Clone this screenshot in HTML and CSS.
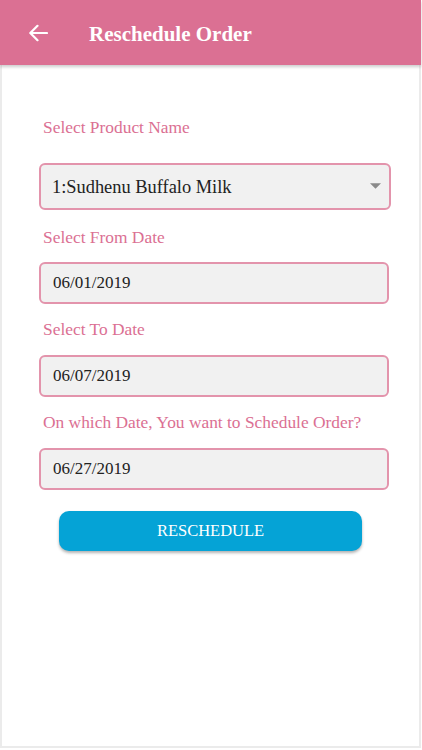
FILE: index.html
```html
<!DOCTYPE html>
<html lang="en">
<head>
  <meta charset="UTF-8" />
  <meta name="viewport" content="width=device-width, initial-scale=1.0"/>
  <title>Reschedule Order</title>
  <link rel="stylesheet" href="styles.css">
</head>
<body>
  <div class="screen">
    <header class="toolbar">
      <svg class="back" viewBox="0 0 20 18" aria-hidden="true">
        <path d="M19 9H2.5M9.5 1.8L2.3 9l7.2 7.2" fill="none" stroke="#fff" stroke-width="2.2" stroke-linecap="round" stroke-linejoin="round"/>
      </svg>
      <h1>Reschedule Order</h1>
    </header>

    <form class="order-form">
      <label class="field-label first" for="product">Select Product Name</label>
      <div class="select-wrap">
        <select id="product">
          <option>1:Sudhenu Buffalo Milk</option>
        </select>
        <svg class="caret" viewBox="0 0 12 6" aria-hidden="true">
          <path d="M0 0h12L6 6z" fill="#8a8a8a"/>
        </svg>
      </div>

      <label class="field-label" for="fromDate">Select From Date</label>
      <input type="text" id="fromDate" value="06/01/2019" readonly>

      <label class="field-label" for="toDate">Select To Date</label>
      <input type="text" id="toDate" value="06/07/2019" readonly>

      <label class="field-label" for="scheduleDate">On which Date, You want to Schedule Order?</label>
      <input type="text" id="scheduleDate" value="06/27/2019" readonly>

      <button type="button" class="btn-reschedule">RESCHEDULE</button>
    </form>
  </div>
</body>
</html>
```

FILE: styles.css
```css
body {
  margin: 0;
  font-family: "Liberation Serif", "Times New Roman", serif;
  background-color: #fff;
}
.screen {
  width: 421px;
  height: 748px;
  box-sizing: border-box;
  border: 2px solid #ebebeb;
  border-top: 0;
}
.toolbar {
  height: 65px;
  margin: 0 -2px;
  padding: 3px 0 0 28px;
  box-sizing: border-box;
  display: flex;
  align-items: center;
  background-color: #db7093;
  box-shadow: 0 2px 3px rgba(0, 0, 0, 0.2);
}
.toolbar .back {
  width: 20px;
  height: 18px;
  margin: -2px 41px 0 0;
}
.toolbar h1 {
  margin: 0;
  font-size: 21px;
  font-weight: bold;
  color: #fff;
}
.order-form {
  display: flex;
  flex-direction: column;
  align-items: flex-start;
  padding: 52px 0 0 37px;
}
.field-label {
  display: block;
  padding-left: 4px;
  margin: 15px 0 15px;
  font-size: 17.4px;
  line-height: 20px;
  color: #db7093;
}
.field-label.first {
  margin: 0 0 26px;
}
.select-wrap {
  position: relative;
}
.select-wrap .caret {
  position: absolute;
  right: 10px;
  top: 20px;
  width: 11px;
  height: 6px;
  pointer-events: none;
}
select,
input {
  box-sizing: border-box;
  border: 2px solid #e394ac;
  border-radius: 6px;
  background-color: #f1f1f1;
  color: #222;
  font-family: "Liberation Serif", "Times New Roman", serif;
  outline: none;
}
select {
  width: 352px;
  height: 47px;
  padding: 0 30px 0 11px;
  font-size: 18.4px;
  appearance: none;
  -webkit-appearance: none;
}
input {
  width: 350px;
  height: 42px;
  padding: 0 12px;
  font-size: 17px;
}
.select-wrap + .field-label {
  margin-top: 17px;
}
input + .field-label {
  margin: 15px 0 16px;
}
.btn-reschedule {
  margin: 21px 0 0 20px;
  width: 303px;
  height: 40px;
  border: 0;
  border-radius: 10px;
  background-color: #05a3d6;
  color: #fff;
  font-family: "Liberation Serif", "Times New Roman", serif;
  font-size: 16.5px;
  box-shadow: 0 2px 3px rgba(0, 0, 0, 0.3);
}
```
